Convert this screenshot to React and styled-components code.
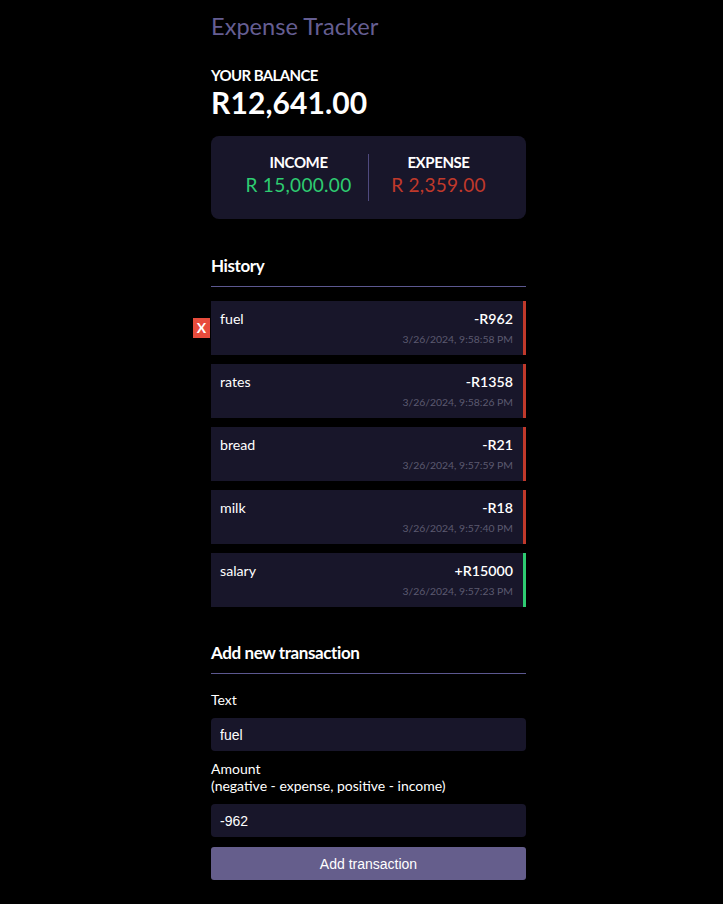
import React, { useState } from 'react';
import styled, { createGlobalStyle } from 'styled-components';

const GlobalStyle = createGlobalStyle`
  html, body {
    margin: 0;
    padding: 0;
    background: #000;
  }
  body {
    font-family: Lato, "Open Sans", sans-serif;
    color: #fff;
  }
  * {
    box-sizing: border-box;
  }
`;

const Page = styled.div`
  display: flex;
  justify-content: center;
  padding: 12px 0 24px 14px;
`;

const Container = styled.div`
  width: 315px;
`;

const Title = styled.h2`
  margin: 0;
  font-size: 23.6px;
  line-height: 28px;
  font-weight: 400;
  color: #655e92;
`;

const BalanceLabel = styled.h4`
  margin: 26px 0 0;
  font-size: 15px;
  line-height: 18px;
  font-weight: 700;
  letter-spacing: -0.6px;
  text-transform: uppercase;
`;

const Balance = styled.h1`
  margin: 2px 0 0;
  font-size: 30px;
  line-height: 33px;
  font-weight: 700;
  letter-spacing: 0.1px;
`;

const Summary = styled.div`
  display: flex;
  margin-top: 17px;
  padding: 18px;
  background: #18162a;
  border-radius: 8px;
`;

const SummaryCol = styled.div`
  flex: 1;
  text-align: center;
  padding-bottom: 5px;
  border-left: ${(p) => (p.$divider ? '1px solid #4f4a7e' : 'none')};
`;

const SummaryLabel = styled.h4`
  margin: 0;
  font-size: 15px;
  line-height: 16px;
  font-weight: 700;
  letter-spacing: -0.4px;
  text-transform: uppercase;
`;

const Money = styled.p`
  margin: 4px 0 0;
  font-size: 19px;
  line-height: 22px;
  letter-spacing: 0.3px;
  color: ${(p) => (p.$plus ? '#2ecc71' : '#c0392b')};
`;

const SectionTitle = styled.h3`
  margin: ${(p) => p.$top || 37}px 0 0;
  padding-bottom: 10px;
  font-size: 17px;
  line-height: 20px;
  font-weight: 700;
  letter-spacing: -0.4px;
  border-bottom: 1px solid #5c5890;
`;

const List = styled.ul`
  list-style: none;
  margin: 14px 0 0;
  padding: 0;
  display: flex;
  flex-direction: column;
  gap: 9px;
`;

const Item = styled.li`
  position: relative;
  padding: 9px 10px 9px 9px;
  background: #18162a;
  border-right: 3px solid ${(p) => (p.$plus ? '#2ecc71' : '#c0392b')};
`;

const ItemRow = styled.div`
  display: flex;
  justify-content: space-between;
  font-size: 14.2px;
  line-height: 17px;
`;

const Amount = styled.span`
  font-weight: 600;
`;

const Stamp = styled.div`
  margin-top: 6px;
  text-align: right;
  font-size: 10.4px;
  line-height: 13px;
  color: #5c5a70;
`;

const DeleteBtn = styled.button`
  position: absolute;
  left: -18px;
  top: 17px;
  width: 17px;
  height: 20px;
  padding: 0;
  border: 0;
  background: #e74c3c;
  color: #fff;
  font-family: Lato, sans-serif;
  font-size: 14px;
  font-weight: 700;
  line-height: 20px;
  cursor: pointer;
  opacity: ${(p) => (p.$show ? 1 : 0)};
`;

const Form = styled.form`
  margin-top: 17px;
`;

const Label = styled.label`
  display: block;
  font-size: 14px;
  line-height: 17px;
`;

const Input = styled.input`
  display: block;
  width: 100%;
  height: 33px;
  margin: 10px 0 9px;
  padding: 0 9px;
  border: 0;
  border-radius: 4px;
  background: #18162a;
  color: #fff;
  font-family: "Liberation Sans", Arial, sans-serif;
  font-size: 14px;
  outline: none;
`;

const Button = styled.button`
  display: block;
  width: 100%;
  height: 33px;
  margin-top: 10px;
  border: 0;
  border-radius: 3px;
  background: #655e8c;
  color: #fff;
  font-family: "Liberation Sans", Arial, sans-serif;
  font-size: 14px;
  cursor: pointer;
`;

const transactions = [
  { id: 1, text: 'fuel', amount: -962, date: '3/26/2024, 9:58:58 PM' },
  { id: 2, text: 'rates', amount: -1358, date: '3/26/2024, 9:58:26 PM' },
  { id: 3, text: 'bread', amount: -21, date: '3/26/2024, 9:57:59 PM' },
  { id: 4, text: 'milk', amount: -18, date: '3/26/2024, 9:57:40 PM' },
  { id: 5, text: 'salary', amount: 15000, date: '3/26/2024, 9:57:23 PM' },
];

const fmt = (n) =>
  n.toLocaleString('en-US', { minimumFractionDigits: 2, maximumFractionDigits: 2 });

export default function App() {
  const [text, setText] = useState('fuel');
  const [amount, setAmount] = useState('-962');
  const [hover, setHover] = useState(1);

  const income = transactions.filter((t) => t.amount > 0).reduce((a, t) => a + t.amount, 0);
  const expense = transactions.filter((t) => t.amount < 0).reduce((a, t) => a - t.amount, 0);

  return (
    <>
      <GlobalStyle />
      <Page>
        <Container>
          <Title>Expense Tracker</Title>
          <BalanceLabel>Your Balance</BalanceLabel>
          <Balance>R{fmt(income - expense)}</Balance>

          <Summary>
            <SummaryCol>
              <SummaryLabel>Income</SummaryLabel>
              <Money $plus>R {fmt(income)}</Money>
            </SummaryCol>
            <SummaryCol $divider>
              <SummaryLabel>Expense</SummaryLabel>
              <Money>R {fmt(expense)}</Money>
            </SummaryCol>
          </Summary>

          <SectionTitle>History</SectionTitle>
          <List>
            {transactions.map((t) => (
              <Item key={t.id} $plus={t.amount > 0} onMouseEnter={() => setHover(t.id)}>
                <ItemRow>
                  <span>{t.text}</span>
                  <Amount>
                    {t.amount > 0 ? '+' : '-'}R{Math.abs(t.amount)}
                  </Amount>
                </ItemRow>
                <Stamp>{t.date}</Stamp>
                <DeleteBtn $show={hover === t.id}>X</DeleteBtn>
              </Item>
            ))}
          </List>

          <SectionTitle $top={36}>Add new transaction</SectionTitle>
          <Form onSubmit={(e) => e.preventDefault()}>
            <Label htmlFor="text">Text</Label>
            <Input id="text" value={text} onChange={(e) => setText(e.target.value)} />
            <Label htmlFor="amount">
              Amount <br />
              (negative - expense, positive - income)
            </Label>
            <Input id="amount" value={amount} onChange={(e) => setAmount(e.target.value)} />
            <Button type="submit">Add transaction</Button>
          </Form>
        </Container>
      </Page>
    </>
  );
}
